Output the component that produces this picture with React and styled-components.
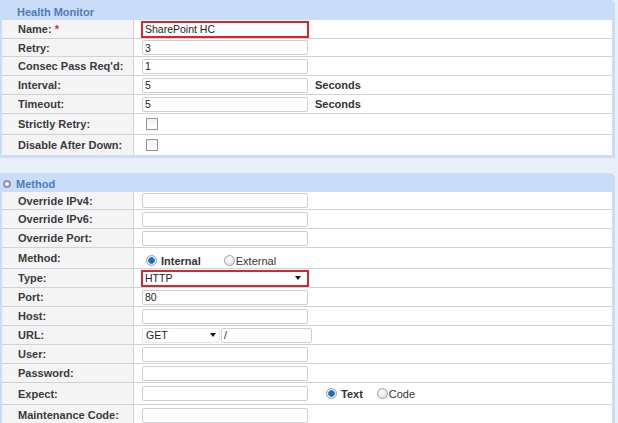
import React from "react";
import styled, { createGlobalStyle } from "styled-components";

const GlobalStyle = createGlobalStyle`
  body {
    margin: 0;
    background: #e9eff8;
    font-family: "Liberation Sans", Arial, sans-serif;
  }
`;

const Page = styled.div`
  width: 618px;
  height: 423px;
  overflow: hidden;
  background: #e9eff8;
  display: flex;
  flex-direction: column;
  gap: 15px;
`;

const Panel = styled.section`
  width: 615px;
  box-sizing: border-box;
  background: #c9dcf8;
  border-top-right-radius: 5px;
  padding: 0 3px 3px 2px;
`;

const PanelHead = styled.div`
  height: ${(p) => p.h}px;
  box-sizing: border-box;
  padding-top: 3px;
  display: flex;
  align-items: center;
  gap: 5px;
  padding-left: ${(p) => (p.icon ? 1 : 15)}px;
  font-size: 11px;
  font-weight: bold;
  color: #4f7db8;
`;

const Knob = styled.span`
  width: 8px;
  height: 8px;
  box-sizing: border-box;
  border-radius: 50%;
  border: 2px solid #8e98a4;
  background: #f4f6f8;
`;

const Rows = styled.div`
  background: #fff;
`;

const Row = styled.div`
  display: grid;
  grid-template-columns: 132px 1fr;
  height: ${(p) => p.h}px;
  box-sizing: border-box;
  border-bottom: ${(p) => (p.last ? "none" : "1px solid #cdd3dc")};
`;

const Label = styled.div`
  background: #f4f4f4;
  border-right: 1px solid #cfd3d9;
  display: flex;
  align-items: center;
  padding-left: 16px;
  font-size: 11px;
  font-weight: bold;
  color: #3a3a3a;
`;

const Star = styled.span`
  color: #d03030;
  margin-left: 3px;
`;

const Cell = styled.div`
  display: flex;
  align-items: center;
  padding-left: 8px;
`;

const Field = styled.div`
  width: ${(p) => p.w || 166}px;
  height: 15px;
  box-sizing: border-box;
  border: 1px solid #cbcfd4;
  border-radius: 2px;
  background: #fff;
  display: flex;
  align-items: center;
  padding-left: 2px;
  font-size: 10.5px;
  color: #222;
`;

const RedField = styled(Field)`
  width: 168px;
  height: 17px;
  margin-left: -1px;
  border: 2px solid #d9262e;
  border-radius: 0;
  padding-left: 2px;
  justify-content: space-between;
  padding-right: 6px;
`;

const Arrow = styled.span`
  width: 0;
  height: 0;
  border-left: 3.5px solid transparent;
  border-right: 3.5px solid transparent;
  border-top: 4px solid #111;
`;

const Select = styled(Field)`
  width: 78px;
  border-color: #e2e5e9;
  justify-content: space-between;
  padding-left: 3px;
  padding-right: 3px;
  margin-right: 1px;
`;

const Unit = styled.span`
  margin-left: 7px;
  font-size: 11px;
  font-weight: bold;
  color: #333;
`;

const Check = styled.span`
  width: 12px;
  height: 12px;
  box-sizing: border-box;
  margin-left: 4px;
  border: 1px solid #8f959c;
  background: linear-gradient(#eef0f2, #fff);
`;

const Radios = styled.div`
  display: flex;
  align-items: center;
  gap: ${(p) => p.gap || 14}px;
  margin-left: ${(p) => p.ml || 0}px;
  padding-top: ${(p) => p.pt || 0}px;
`;

const Choice = styled.label`
  display: flex;
  align-items: center;
  gap: ${(p) => (p.on ? 4 : 1)}px;
  font-size: 11px;
  color: #333;
  font-weight: ${(p) => (p.on ? "bold" : "normal")};
`;

const Dot = styled.span`
  width: 11px;
  height: 11px;
  box-sizing: border-box;
  border-radius: 50%;
  border: 1px solid #9aa0a7;
  background: ${(p) =>
    p.on
      ? "radial-gradient(circle, #1f6fb8 0 2.6px, #4a9ad8 3.2px, #e8eef3 3.6px)"
      : "radial-gradient(circle at 40% 35%, #fff, #d6d9dc)"};
`;

const top = [
  { label: "Name:", star: true, h: 19, red: "SharePoint HC" },
  { label: "Retry:", h: 18, value: "3" },
  { label: "Consec Pass Req'd:", h: 19, value: "1" },
  { label: "Interval:", h: 19, value: "5", unit: "Seconds" },
  { label: "Timeout:", h: 19, value: "5", unit: "Seconds" },
  { label: "Strictly Retry:", h: 21, check: true },
  { label: "Disable After Down:", h: 20, check: true, last: true },
];

function RadioSet({ items, ml, pt, gap }) {
  return (
    <Radios ml={ml} pt={pt} gap={gap}>
      {items.map((c, i) => (
        <Choice key={c} on={i === 0}>
          <Dot on={i === 0} />
          {c}
        </Choice>
      ))}
    </Radios>
  );
}

function renderCell(r) {
  if (r.red) return <RedField>{r.red}{r.arrow && <Arrow />}</RedField>;
  if (r.check) return <Check />;
  if (r.radios) return <RadioSet items={r.radios} ml={4} pt={5} gap={23} />;
  if (r.url)
    return (
      <>
        <Select>
          GET <Arrow />
        </Select>
        <Field w={91}>/</Field>
      </>
    );
  return (
    <>
      <Field w={r.w}>{r.value}</Field>
      {r.unit && <Unit>{r.unit}</Unit>}
      {r.extra && <RadioSet items={r.extra} ml={18} gap={14} />}
    </>
  );
}

const method = [
  { label: "Override IPv4:", h: 18 },
  { label: "Override IPv6:", h: 19 },
  { label: "Override Port:", h: 19 },
  { label: "Method:", h: 21, radios: ["Internal", "External"] },
  { label: "Type:", h: 19, red: "HTTP", arrow: true },
  { label: "Port:", h: 19, value: "80" },
  { label: "Host:", h: 19 },
  { label: "URL:", h: 19, url: true },
  { label: "User:", h: 19 },
  { label: "Password:", h: 19 },
  { label: "Expect:", h: 22, extra: ["Text", "Code"] },
  { label: "Maintenance Code:", h: 20, last: true },
];

export default function App() {
  return (
    <>
      <GlobalStyle />
      <Page>
        <Panel>
          <PanelHead h={20}>Health Monitor</PanelHead>
          <Rows>
            {top.map((r) => (
              <Row key={r.label} h={r.h} last={r.last}>
                <Label>
                  {r.label}
                  {r.star && <Star>*</Star>}
                </Label>
                <Cell>{renderCell(r)}</Cell>
              </Row>
            ))}
          </Rows>
        </Panel>
        <Panel>
          <PanelHead h={19} icon>
            <Knob />
            Method
          </PanelHead>
          <Rows>
            {method.map((r) => (
              <Row key={r.label + r.h} h={r.h} last={r.last}>
                <Label>{r.label}</Label>
                <Cell>{renderCell(r)}</Cell>
              </Row>
            ))}
          </Rows>
        </Panel>
      </Page>
    </>
  );
}
